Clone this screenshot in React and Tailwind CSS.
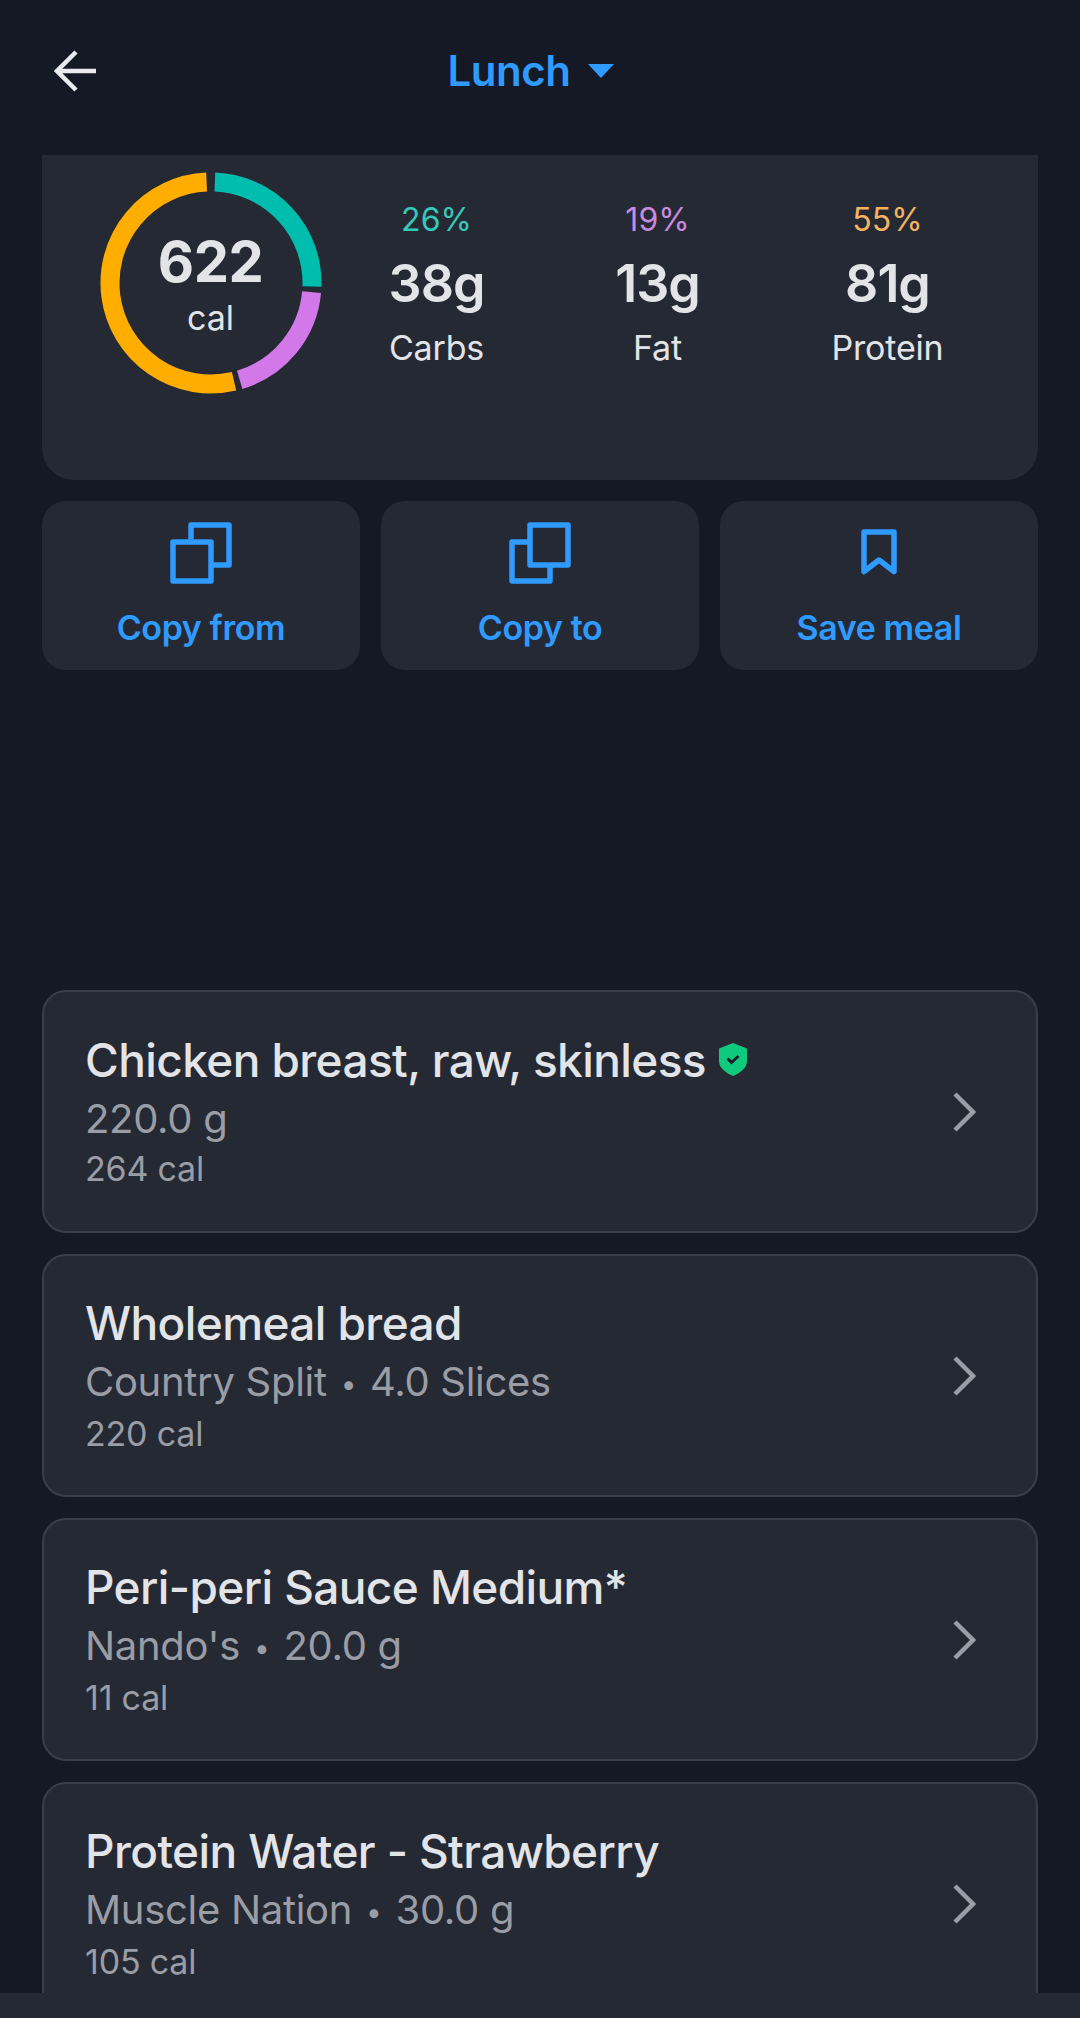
import React from "react";

const polar = (deg, r) => {
  const a = ((deg - 90) * Math.PI) / 180;
  return [111 + r * Math.cos(a), 111 + r * Math.sin(a)];
};

const arc = (from, to, r = 101) => {
  const [x1, y1] = polar(from, r);
  const [x2, y2] = polar(to, r);
  return `M ${x1} ${y1} A ${r} ${r} 0 ${to - from > 180 ? 1 : 0} 1 ${x2} ${y2}`;
};

function Donut() {
  return (
    <div className="relative w-[222px] h-[222px] shrink-0">
      <svg width="222" height="222" viewBox="0 0 222 222" fill="none" strokeWidth="19">
        <path d={arc(2.2, 92)} stroke="#00bdae" />
        <path d={arc(95.2, 163.5)} stroke="#d278e8" />
        <path d={arc(166.8, 357.5)} stroke="#ffae00" />
      </svg>
      <div className="absolute inset-0 flex flex-col items-center text-[#e2e4e7]">
        <span className="mt-[57px] text-[56px] leading-[66px] font-bold tracking-[-0.5px]">622</span>
        <span className="mt-[4px] text-[34px] leading-[38px]">cal</span>
      </div>
    </div>
  );
}

function Macro({ pct, grams, name, color, width }) {
  return (
    <div className={`flex flex-col items-center ${width}`}>
      <span className={`text-[32px] leading-[40px] ${color}`}>{pct}</span>
      <span className="mt-[15px] text-[52px] leading-[58px] font-semibold tracking-[-1px] text-[#e2e4e7]">{grams}</span>
      <span className="mt-[15px] text-[34px] leading-[40px] tracking-[-0.2px] text-[#e2e4e7]">{name}</span>
    </div>
  );
}

function CopyIcon({ front }) {
  return (
    <svg width="62" height="62" viewBox="0 0 62 62" fill="none" stroke="#2f9bff" strokeWidth="5.5" strokeLinejoin="round">
      {front === "left" ? (
        <>
          <path d="M21 17.500V3h38v40H41.500" />
          <rect x="3" y="20" width="38" height="39" />
        </>
      ) : (
        <>
          <path d="M21 20H3v39h38V43" />
          <rect x="21" y="3" width="38" height="40" />
        </>
      )}
    </svg>
  );
}

function BookmarkIcon() {
  return (
    <svg width="36" height="48" viewBox="0 0 36 48" fill="none" stroke="#2f9bff" strokeWidth="5.500" strokeLinejoin="round">
      <path d="M3 3h30v39.500L18 31 3 42.500z" />
    </svg>
  );
}

function ActionButton({ icon, label }) {
  return (
    <div className="flex-1 h-[169px] rounded-[24px] bg-[#252934] flex flex-col items-center">
      <div className="h-[62px] mt-[21px] flex items-center">{icon}</div>
      <span className="mt-[24px] text-[34px] leading-[40px] font-semibold tracking-[-0.4px] text-[#2f9bff]">{label}</span>
    </div>
  );
}

function FoodCard({ title, brand, amount, cal, verified }) {
  return (
    <div className="h-[243px] shrink-0 rounded-[24px] border-2 border-[#3a3e49] bg-[#252934] pl-[41px] pr-[60px] flex items-center justify-between">
      <div className="flex flex-col">
        <div className="flex items-center h-[56px] mt-[1px]">
          <span className="text-[46px] leading-[56px] font-medium tracking-[-0.6px] text-[#e2e4e7]">{title}</span>
          {verified && (
            <svg className="ml-[13px] mt-[-1px]" width="28" height="33" viewBox="0 0 28 33">
              <path d="M14 0 L28 5.500 V18 C28 25 21 30 14 33 C7 30 0 25 0 18 V5.500 Z" fill="#0fca7c" />
              <path d="M8.500 15.500 L12.500 19.500 L19.500 13" fill="none" stroke="#16202a" strokeWidth="3" />
            </svg>
          )}
        </div>
        <span className="mt-[3px] text-[40px] leading-[56px] tracking-[-0.3px] text-[#9a9da5]">
          {brand && (
            <>
              {brand} <span className="mx-[3px] text-[28px] align-[2px]">•</span>{" "}
            </>
          )}
          {amount}
        </span>
        <span className="mt-[-1px] text-[34px] leading-[46px] tracking-[-0.2px] text-[#9a9da5]">{cal}</span>
      </div>
      <svg width="24" height="40" viewBox="0 0 24 40" fill="none" stroke="#9a9da5" strokeWidth="4.500">
        <path d="M3 2 L21 20 L3 38" />
      </svg>
    </div>
  );
}

export default function App() {
  return (
    <div className="relative w-[1080px] h-[2018px] overflow-hidden bg-[#141925] font-['Inter',sans-serif]">
      <header className="h-[155px] px-[54px] relative flex items-center justify-center">
        <svg className="absolute left-[54px] top-[50px]" width="44" height="42" viewBox="0 0 44 42" fill="none" stroke="#e9ebee" strokeWidth="4.500">
          <path d="M42 21H3M22 2 L3 21 L22 40" />
        </svg>
        <div className="flex items-center gap-[18px] mt-[-14px] ml-[-18px]">
          <span className="text-[42px] leading-[50px] font-semibold tracking-[-0.5px] text-[#2f9bff]">Lunch</span>
          <span className="w-0 h-0 border-l-[13px] border-r-[13px] border-t-[14px] border-l-transparent border-r-transparent border-t-[#2f9bff]" />
        </div>
      </header>

      <main className="px-[42px] flex flex-col">
        <section className="h-[325px] rounded-b-[32px] bg-[#252934] pt-[17px] pl-[57.5px] flex items-start">
          <Donut />
          <div className="flex mt-[28px] ml-[4px]">
            <Macro pct="26%" grams="38g" name="Carbs" color="text-[#35c9b9]" width="w-[222px]" />
            <Macro pct="19%" grams="13g" name="Fat" color="text-[#c98ade]" width="w-[220px]" />
            <Macro pct="55%" grams="81g" name="Protein" color="text-[#f5b25f]" width="w-[240px]" />
          </div>
        </section>

        <div className="mt-[21px] flex gap-[21px]">
          <ActionButton icon={<CopyIcon front="left" />} label="Copy from" />
          <ActionButton icon={<CopyIcon front="right" />} label="Copy to" />
          <ActionButton icon={<BookmarkIcon />} label="Save meal" />
        </div>

        <div className="mt-[320px] flex flex-col gap-[21px]">
          <FoodCard title="Chicken breast, raw, skinless" amount="220.0 g" cal="264 cal" verified />
          <FoodCard title="Wholemeal bread" brand="Country Split" amount="4.0 Slices" cal="220 cal" />
          <FoodCard title="Peri-peri Sauce Medium*" brand="Nando's" amount="20.0 g" cal="11 cal" />
          <FoodCard title="Protein Water - Strawberry" brand="Muscle Nation" amount="30.0 g" cal="105 cal" />
        </div>
      </main>

      <div className="absolute left-0 right-0 bottom-0 h-[25px] bg-[#252934]" />
    </div>
  );
}
